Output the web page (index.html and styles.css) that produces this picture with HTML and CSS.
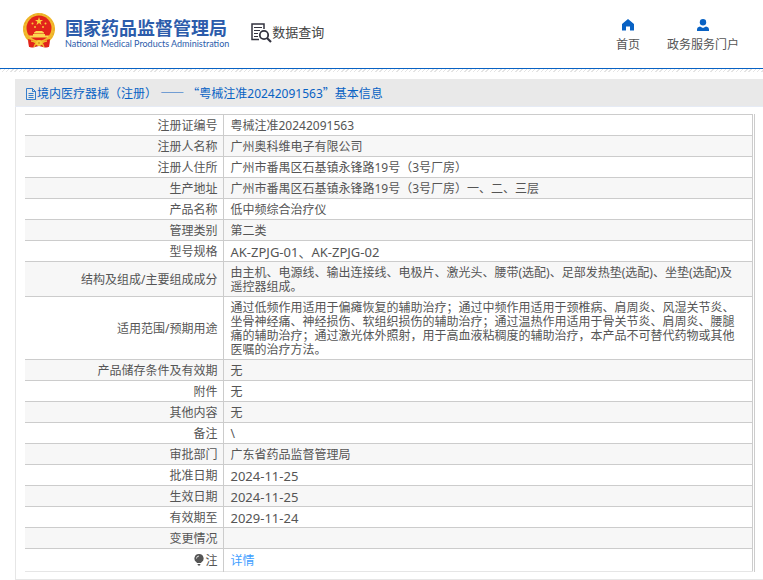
FILE: index.html
```html
<!DOCTYPE html>
<html lang="zh-CN">
<head>
<meta charset="utf-8">
<title>国家药品监督管理局 数据查询</title>
<link rel="stylesheet" href="styles.css">
</head>
<body>
<header class="site-header">
  <div class="brand">
    <svg class="emblem" viewBox="0 0 34 36" aria-hidden="true">
      <path d="M6 24 L28 24 L27 33 Q26 35 23 34.500 L17 33 L11 34.500 Q8 35 7 33 Z" fill="#d8201c"/>
      <circle cx="17" cy="16" r="16" fill="#f2b92c"/>
      <circle cx="17" cy="16" r="15" fill="none" stroke="#e5a825" stroke-width="1" stroke-dasharray="2 2"/>
      <circle cx="17" cy="15" r="12.500" fill="#e2231b"/>
      <path d="M17 4 L18 7 L21 7 L18.600 8.800 L19.500 12 L17 10 L14.500 12 L15.400 8.800 L13 7 L16 7 Z" fill="#fbd23c"/>
      <g fill="#f9c938"><circle cx="10.500" cy="10.500" r="1"/><circle cx="13" cy="14" r="1"/><circle cx="21" cy="14" r="1"/><circle cx="23.500" cy="10.500" r="1"/></g>
      <path d="M12 19.500 L14 18 H20 L22 19.500 V20.500 H12 Z M11 21 H23 V22.500 H27 L26 24.500 H8 L7 22.500 H11 Z" fill="#fbd850"/>
      <path d="M6 26 Q12 27 14 30 L10 34 H7 Z M28 26 Q22 27 20 30 L24 34 H27 Z" fill="#e2231b"/>
      <path d="M9 28 Q12 28 14 30 L12 34 M25 28 Q22 28 20 30 L22 34" fill="none" stroke="#f2b92c" stroke-width="1.500"/>
      <circle cx="17" cy="30" r="3" fill="#f8cb3a"/>
      <circle cx="17" cy="30" r="1" fill="#d99a1d"/>
    </svg>
    <div class="brand-text">
      <span class="brand-cn">国家药品监督管理局</span>
      <span class="brand-en">National Medical Products Administration</span>
    </div>
  </div>
  <div class="section-name">
    <svg class="query-icon" viewBox="0 0 21 20" fill="none" stroke="#33333f" aria-hidden="true">
      <path d="M8 16.500 H1 V1 H13 V6" stroke-width="1.500"/>
      <path d="M3 4.500 H11 M3 7.500 H9 M3 10.500 H7 M3 13.500 H7" stroke-width="1.200"/>
      <circle cx="13" cy="12" r="4.200" stroke-width="1.800"/>
      <path d="M16 15 L20 19" stroke-width="2.200"/>
    </svg>
    <span>数据查询</span>
  </div>
  <nav class="site-nav">
    <a href="#">
      <svg viewBox="0 0 12 12" aria-hidden="true"><path d="M6 0 L12 5 V11.500 H8 V7.500 H4 V11.500 H0 V5 Z" fill="#0862c4"/></svg>
      <span>首页</span>
    </a>
    <a href="#">
      <svg viewBox="0 0 12 12" aria-hidden="true"><circle cx="6" cy="3.300" r="3.200" fill="#0862c4"/><path d="M0 12 V10.500 Q0 8 3 7.500 L6 9 L9 7.500 Q12 8 12 10.500 V12 Z" fill="#0862c4"/></svg>
      <span>政务服务门户</span>
    </a>
  </nav>
</header>
<main class="panel">
  <h1 class="panel-title">
    <svg class="doc-icon" viewBox="0 0 12 12" fill="none" stroke="#0862c4" aria-hidden="true"><path d="M1.500 .5 H7.500 L10.500 3.500 V11.500 H1.500 Z M7.500 .5 V3.500 H10.500 M3.500 5.500 H8.500 M3.500 7.500 H8.500 M3.500 9.500 H8.500" stroke-width=".8"/></svg>
    <span>境内医疗器械（注册） <span class="wide">——</span> <span class="wide">“</span>粤械注准20242091563<span class="wide">”</span>基本信息</span>
  </h1>
  <div class="table-wrap">
    <table class="info">
      <colgroup><col class="label-col"><col></colgroup>
      <tbody>
        <tr><th scope="row">注册证编号</th><td>粤械注准20242091563</td></tr>
        <tr><th scope="row">注册人名称</th><td>广州奥科维电子有限公司</td></tr>
        <tr><th scope="row">注册人住所</th><td>广州市番禺区石基镇永锋路19号（3号厂房）</td></tr>
        <tr><th scope="row">生产地址</th><td>广州市番禺区石基镇永锋路19号（3号厂房）一、二、三层</td></tr>
        <tr><th scope="row">产品名称</th><td>低中频综合治疗仪</td></tr>
        <tr><th scope="row">管理类别</th><td>第二类</td></tr>
        <tr><th scope="row">型号规格</th><td class="code">AK-ZPJG-01、AK-ZPJG-02</td></tr>
        <tr><th scope="row">结构及组成/主要组成成分</th><td>由主机、电源线、输出连接线、电极片、激光头、腰带(选配)、足部发热垫(选配)、坐垫(选配)及遥控器组成。</td></tr>
        <tr><th scope="row">适用范围/预期用途</th><td>通过低频作用适用于偏瘫恢复的辅助治疗；通过中频作用适用于颈椎病、肩周炎、风湿关节炎、坐骨神经痛、神经损伤、软组织损伤的辅助治疗；通过温热作用适用于骨关节炎、肩周炎、腰腿痛的辅助治疗；通过激光体外照射，用于高血液粘稠度的辅助治疗，本产品不可替代药物或其他医嘱的治疗方法。</td></tr>
        <tr><th scope="row">产品储存条件及有效期</th><td>无</td></tr>
        <tr><th scope="row">附件</th><td>无</td></tr>
        <tr><th scope="row">其他内容</th><td>无</td></tr>
        <tr><th scope="row">备注</th><td>\</td></tr>
        <tr><th scope="row">审批部门</th><td>广东省药品监督管理局</td></tr>
        <tr><th scope="row">批准日期</th><td class="code">2024-11-25</td></tr>
        <tr><th scope="row">生效日期</th><td class="code">2024-11-25</td></tr>
        <tr><th scope="row">有效期至</th><td class="code">2029-11-24</td></tr>
        <tr><th scope="row">变更情况</th><td></td></tr>
        <tr class="note"><th scope="row"><svg class="bulb" viewBox="0 0 10 12" aria-hidden="true"><path d="M5 0 A4.500 4.500 0 0 1 7.500 8.300 L7 9 H3 L2.500 8.300 A4.500 4.500 0 0 1 5 0 Z M3.500 10 H6.500 L6 11.500 H4 Z" fill="#555"/><path d="M2.500 4.500 A2.500 2.500 0 0 1 5 2" fill="none" stroke="#ddd"/></svg>注</th><td><a href="#">详情</a></td></tr>
      </tbody>
    </table>
  </div>
</main>
</body>
</html>
```
FILE: styles.css
```css
* {
  box-sizing: border-box;
}

body {
  margin: 0;
  background: #fff;
  color: #555;
  font: 12px/14px "Noto Sans", "Noto Sans CJK SC", sans-serif;
}

a {
  color: inherit;
  text-decoration: none;
}

svg {
  display: block;
}

.site-header {
  display: flex;
  height: 72px;
  padding: 0 24px 0 22px;
  background:
    linear-gradient(#0862c4, #0862c4) 0 68px / 100% 1px no-repeat,
    repeating-linear-gradient(135deg, #e4e4e4 0 1px, #fff 1px 3px) 0 69px / 100% 3px no-repeat;
}

.brand {
  display: flex;
  gap: 9px;
  padding-top: 13px;
}

.emblem {
  width: 34px;
  height: 36px;
}

.brand-text {
  display: flex;
  flex-direction: column;
  padding-top: 4px;
  color: #2c5cab;
  white-space: nowrap;
}

.brand-cn {
  font: bold 18px/20px "Noto Sans CJK SC", sans-serif;
}

.brand-en {
  font: 9px/14px Lato, sans-serif;
}

.section-name {
  display: flex;
  margin-left: 22px;
  padding-top: 23px;
  color: #444;
  font-size: 13px;
  line-height: 18px;
  white-space: nowrap;
}

.query-icon {
  width: 21px;
  height: 20px;
}

.site-nav {
  display: flex;
  gap: 27px;
  margin-left: auto;
  padding-top: 19px;
}

.site-nav a {
  display: flex;
  flex-direction: column;
  align-items: center;
  gap: 7px;
}

.site-nav svg {
  width: 12px;
  height: 12px;
}

.panel {
  margin: 7px 0 0 15px;
  border: 1px solid #e6e6e6;
  border-width: 0 0 1px 1px;
}

.panel-title {
  display: flex;
  align-items: center;
  height: 28px;
  margin: 0 0 7px -1px;
  padding: 2px 10px 0;
  border-bottom: 1px solid #e6ebf5;
  background: #e9e9e9;
  color: #0862c4;
  font-size: 12px;
  font-weight: normal;
}

.doc-icon {
  width: 12px;
  height: 12px;
}

.wide {
  font-family: "Noto Sans CJK SC", sans-serif;
  line-height: 10px;
}

.table-wrap {
  margin: 0 8px 7px 9px;
  padding-right: 1px;
  border-right: 1px solid #ccc;
}

.info {
  width: 100%;
  border-collapse: collapse;
  table-layout: fixed;
  border: 1px solid #ccc;
  border-width: 1px 1px 1px 0;
  border-bottom-color: #e6e6e6;
}

.label-col {
  width: 198px;
}

.info th,
.info td {
  height: 21px;
  padding: 4px 5px 2px 7px;
  border-top: 1px solid #ccc;
  font-weight: normal;
}

.info th {
  border-right: 1px solid #ccc;
  text-align: right;
}

.info td {
  padding-right: 14px;
  text-align: left;
}

.info tr:nth-child(even) {
  background: #f7f7f7;
}

.info .code {
  font-size: 13px;
}

.info .note th,
.info .note td {
  height: 23px;
}

.note a {
  color: #409eff;
}

.bulb {
  display: inline-block;
  width: 10px;
  height: 12px;
  margin-right: 1px;
  vertical-align: -1px;
}
```
